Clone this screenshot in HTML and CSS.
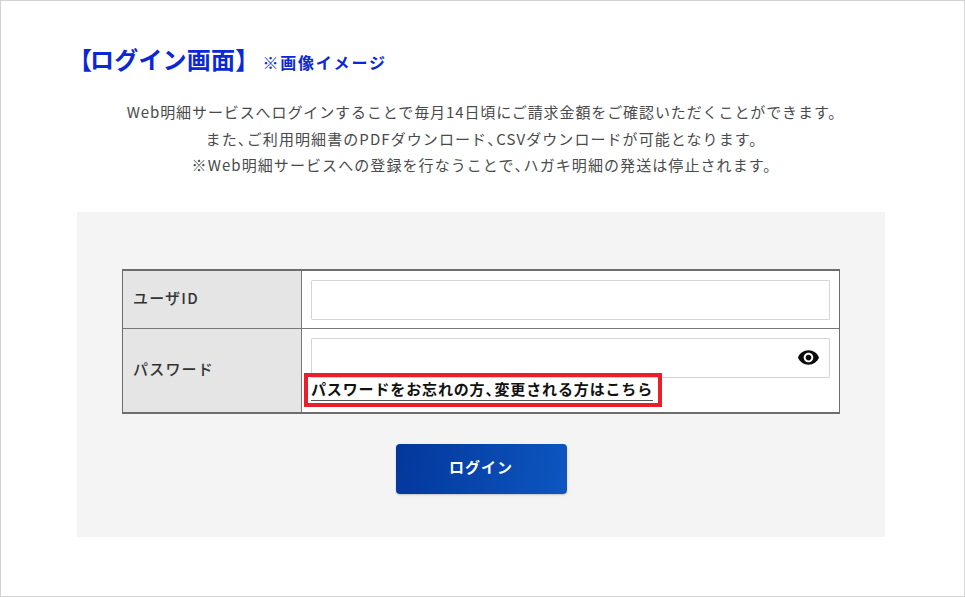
FILE: index.html
```html
<!DOCTYPE html>
<html lang="ja">
<head>
<meta charset="utf-8">
<title>ログイン画面</title>
<link rel="stylesheet" href="styles.css">
</head>
<body>
<main class="frame">
  <h1 class="title"><span class="title-main"><span class="open">【</span>ログイン画面】</span><span class="title-sub">※画像イメージ</span></h1>
  <div class="lead">
    <p>Web明細サービスへログインすることで毎月14日頃にご請求金額をご確認いただくことができます。</p>
    <p class="wide">また<span class="ten">、</span>ご利用明細書のPDFダウンロード<span class="ten">、</span>CSVダウンロードが可能となります。</p>
    <p class="wide">※Web明細サービスへの登録を行なうことで<span class="ten">、</span>ハガキ明細の発送は停止されます。</p>
  </div>
  <section class="panel">
    <div class="form-table">
      <div class="row row-id">
        <div class="label">ユーザID</div>
        <div class="field"><div class="input"></div></div>
      </div>
      <div class="row row-pw">
        <div class="label">パスワード</div>
        <div class="field">
          <div class="input input-pw">
            <svg class="eye" viewBox="0 0 24 24" aria-hidden="true"><path d="M12 4.5C7 4.5 2.73 7.61 1 12c1.73 4.39 6 7.500 11 7.500s9.270-3.110 11-7.500c-1.730-4.390-6-7.500-11-7.500zM12 17c-2.760 0-5-2.240-5-5s2.240-5 5-5 5 2.240 5 5-2.240 5-5 5zm0-8c-1.660 0-3 1.340-3 3s1.340 3 3 3 3-1.340 3-3-1.340-3-3-3z"/></svg>
          </div>
          <div class="forgot-wrap"><a class="forgot" href="#">パスワードをお忘れの方<span class="ten">、</span>変更される方はこちら</a><span class="highlight"></span></div>
        </div>
      </div>
    </div>
    <a class="login" href="#">ログイン</a>
  </section>
</main>
</body>
</html>
```
FILE: styles.css
```css
* { box-sizing: border-box; }
html, body { margin: 0; padding: 0; background: #fff; }
body { font-family: "Noto Sans CJK JP", "Noto Sans", sans-serif; }
.frame {
  width: 965px;
  height: 597px;
  border: 1px solid #d2d2d2;
  border-right-color: #d8d8d8;
  padding: 42px 79px 0 76px;
  overflow: hidden;
}
.title { margin: 0 0 0 -9px; display: flex; align-items: baseline; color: #0b27d6; font-weight: 700; line-height: 32px; }
.title-main { font-size: 24px; letter-spacing: .2px; }
.open { letter-spacing: -2px; }
.title-sub { font-size: 16px; letter-spacing: 1.8px; margin-left: 3px; }
.lead { margin-top: 21px; padding-left: 9px; text-align: center; color: #4a4a4a; font-size: 15px; letter-spacing: .9px; line-height: 26.500px; }
.lead p { margin: 0; }
.lead .wide { letter-spacing: 1.08px; }
.lead .wide .ten, .ten { letter-spacing: -6px; }
.panel {
  margin-top: 33px;
  width: 808px;
  height: 325px;
  background: #f4f4f4;
  padding: 57px 45px 0;
  display: flex;
  flex-direction: column;
  align-items: center;
}
.form-table { width: 718px; border: 1px solid #6d6d6d; border-top-width: 2px; border-bottom-width: 2px; background: #fff; }
.row { display: flex; }
.row-id { height: 58px; border-bottom: 1px solid #777; }
.row-pw { height: 83px; }
.label {
  width: 179px;
  flex: none;
  background: #e5e5e5;
  border-right: 1px solid #777;
  padding-left: 10px;
  display: flex;
  align-items: center;
  font-size: 15px;
  font-weight: 500;
  letter-spacing: 1.2px;
  color: #333;
}
.row-id .label { padding-bottom: 4px; }
.row-pw .label { padding-bottom: 3px; }
.field { flex: 1; padding: 9px 9px 0; position: relative; }
.input { height: 40px; background: #fff; border: 1px solid #d4d4d4; border-radius: 1px; }
.input-pw { display: flex; align-items: center; justify-content: flex-end; padding-right: 9px; }
.eye { width: 23px; height: 23px; fill: #0c0c0c; display: block; }
.forgot-wrap { position: relative; display: flex; }
.forgot {
  color: #111;
  font-size: 15px;
  font-weight: 700;
  text-decoration: none;
  border-bottom: 1px solid #555;
  white-space: nowrap;
  line-height: 22px;
  letter-spacing: .86px;
}
.highlight { position: absolute; left: -7px; top: -5px; width: 358px; height: 34px; border: 4px solid #e9202c; }
.login {
  margin-top: 30px;
  width: 171px;
  height: 50px;
  padding-bottom: 5px;
  border-radius: 4px;
  background: linear-gradient(100deg, #03379b, #0d56c0);
  box-shadow: 0 1px 2px rgba(0,0,0,.2);
  color: #fff;
  font-size: 15px;
  font-weight: 700;
  letter-spacing: 1px;
  text-decoration: none;
  display: flex;
  align-items: center;
  justify-content: center;
}
```
